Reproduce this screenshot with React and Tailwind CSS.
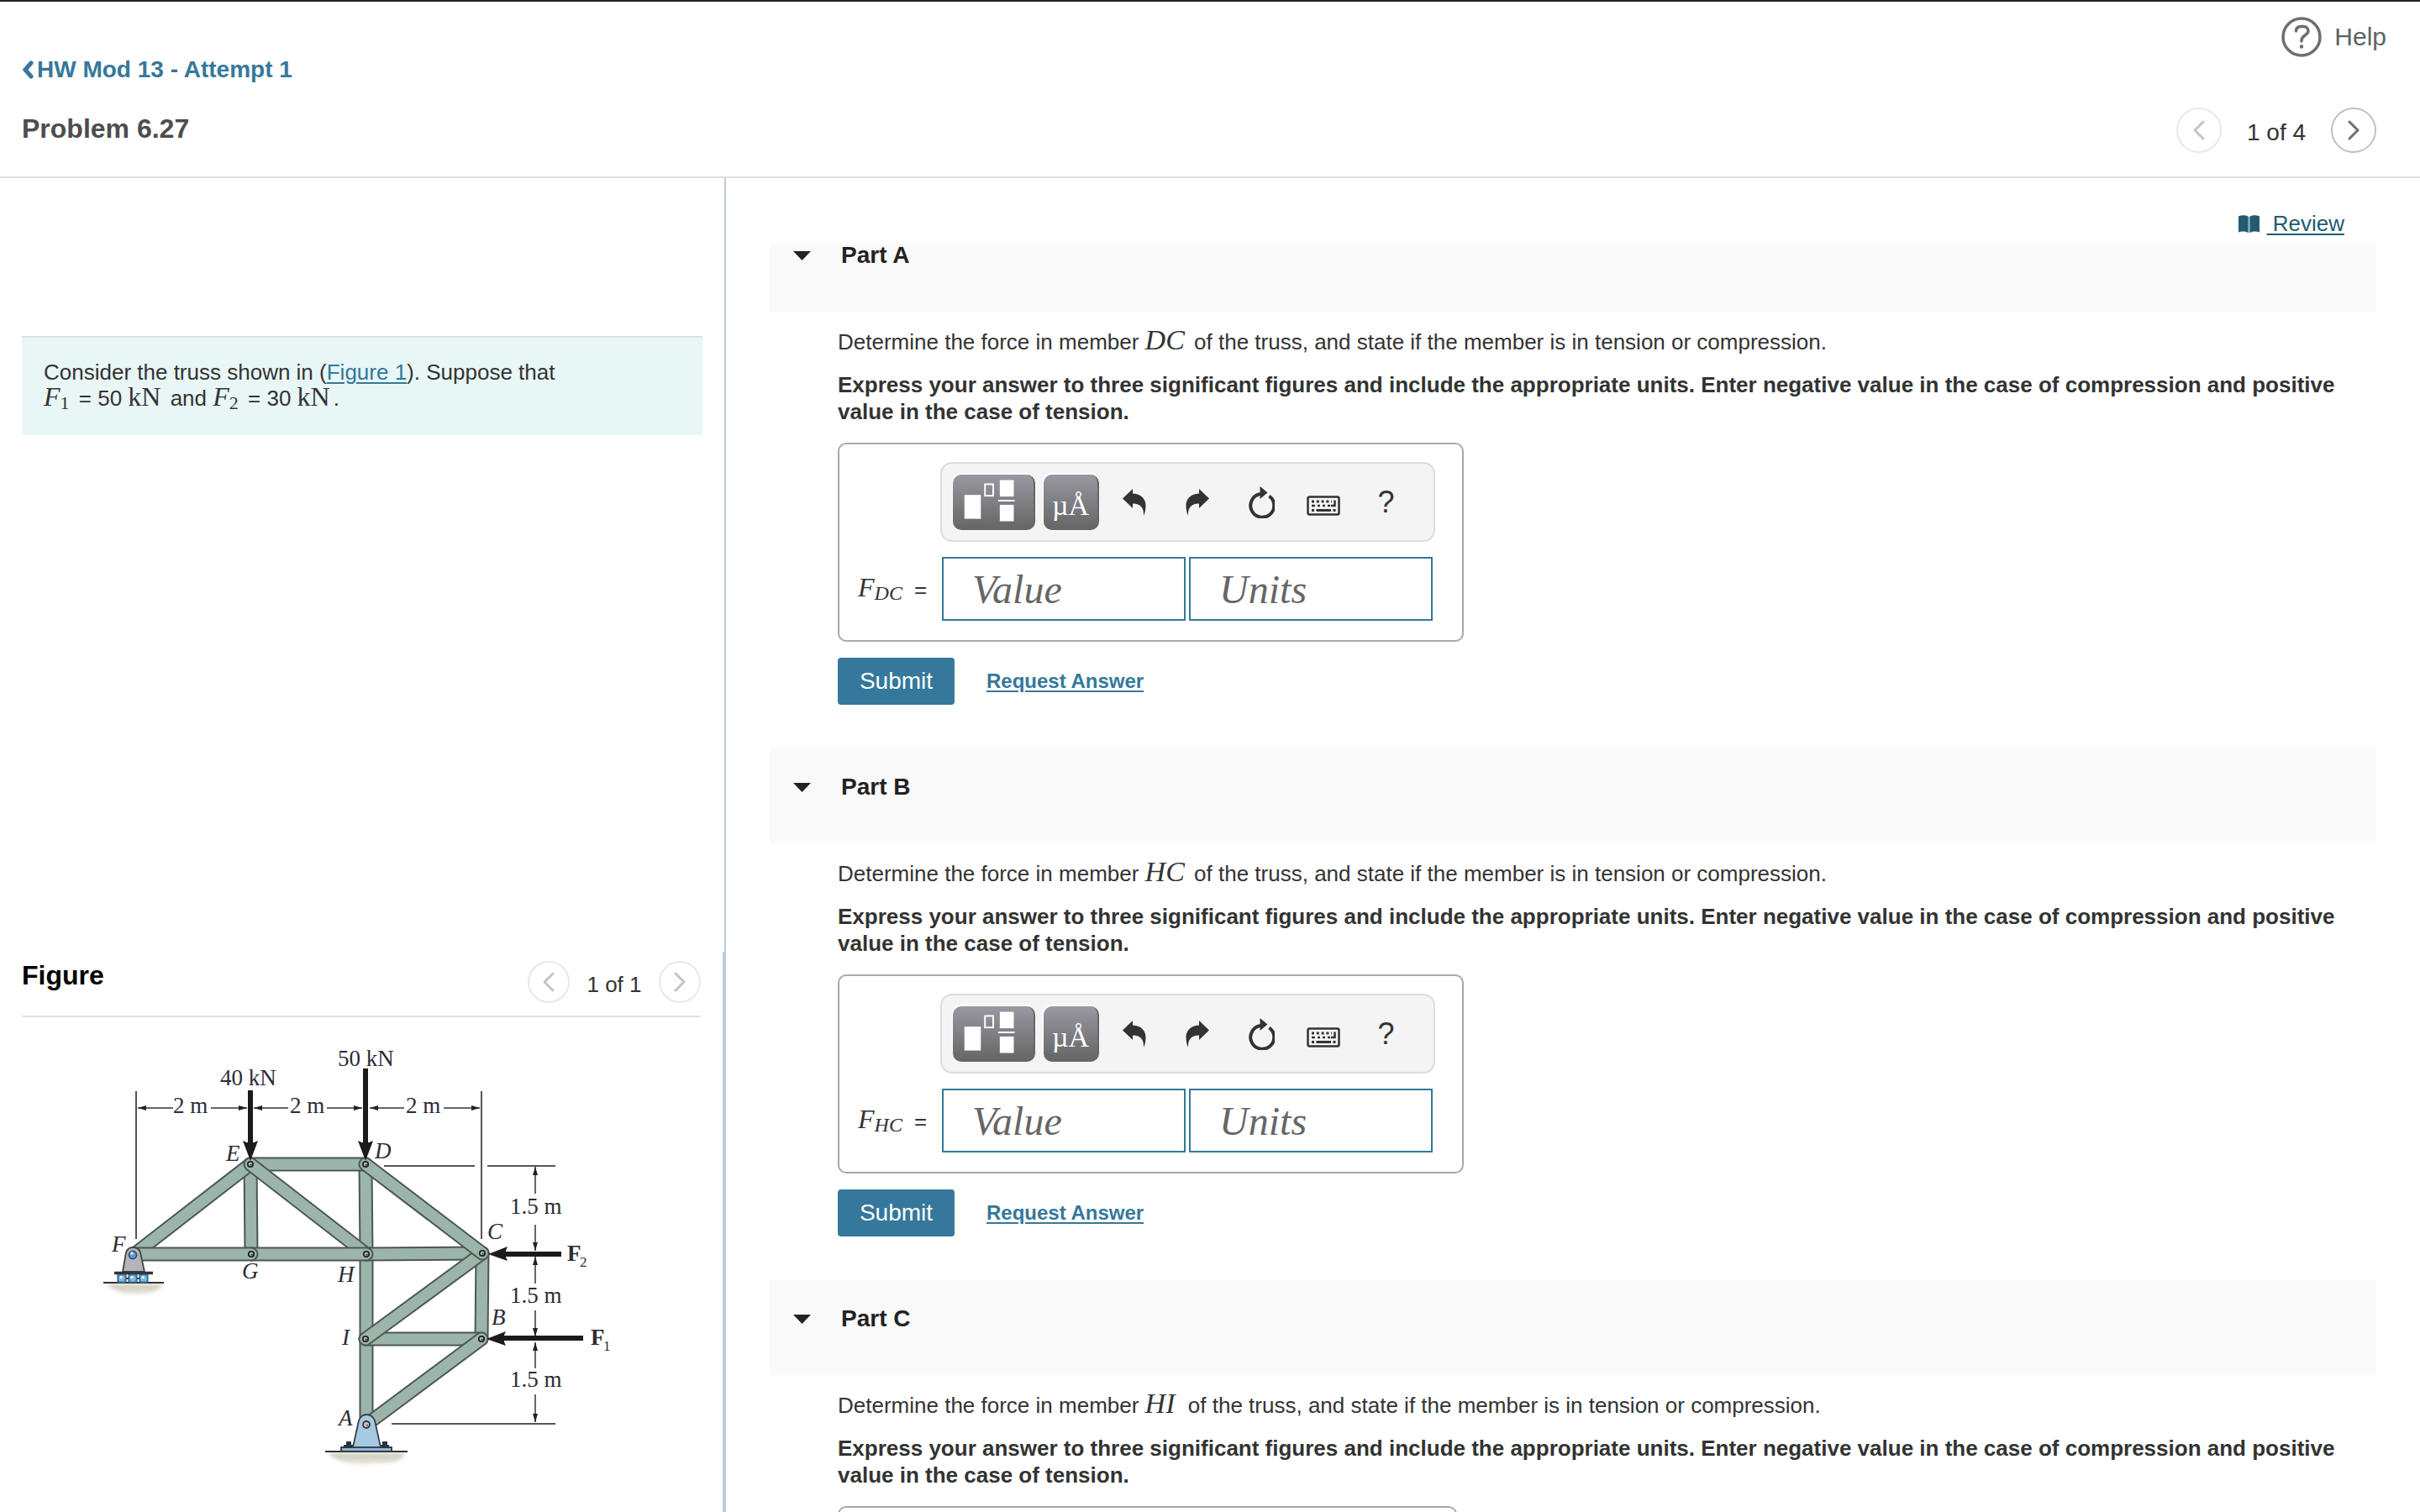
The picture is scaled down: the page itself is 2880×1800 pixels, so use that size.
import React from 'react';

const MEMBER_FILL = '#9bb5aa';
const MEMBER_EDGE = '#4b5753';

const NODES = {
    A: [436, 1696],
    B: [573, 1594],
    C: [574, 1492],
    D: [435, 1386],
    E: [298, 1386],
    F: [160, 1493],
    G: [299, 1493],
    H: [436, 1493],
    I: [435, 1594],
};

// Painted back to front, so the overlaps at each pin come out right
const MEMBERS = ['HA', 'DH', 'EG', 'ED', 'FE', 'EH', 'HC', 'GH', 'FG', 'CB', 'IB', 'AB', 'IC', 'DC'];

const NODE_LABELS = [
    ['E', 269, 1382],
    ['D', 446, 1379],
    ['F', 133, 1490],
    ['G', 288, 1522],
    ['H', 402, 1526],
    ['C', 580, 1475],
    ['B', 585, 1577],
    ['I', 407, 1601],
    ['A', 403, 1697],
];

const TEXT_LABELS = [
    ['40 kN', 262, 1292],
    ['50 kN', 402, 1269],
    ['2 m', 206, 1325],
    ['2 m', 345, 1325],
    ['2 m', 483, 1325],
    ['1.5 m', 607, 1445],
    ['1.5 m', 607, 1551],
    ['1.5 m', 607, 1651],
];

// [x1, y1, x2, y2], the small arrowhead sits on the second point
const DIMENSIONS = [
    [206, 1319, 164, 1319],
    [251, 1319, 294, 1319],
    [343, 1319, 302, 1319],
    [389, 1319, 431, 1319],
    [481, 1319, 440, 1319],
    [528, 1319, 571, 1319],
    [637, 1421, 637, 1389],
    [637, 1458, 637, 1489],
    [637, 1528, 637, 1496],
    [637, 1560, 637, 1591],
    [637, 1629, 637, 1598],
    [637, 1660, 637, 1693],
];

const EXTENSIONS = [
    [162, 1299, 162, 1475],
    [573, 1299, 573, 1475],
    [457, 1388, 565, 1388],
    [580, 1388, 661, 1388],
    [466, 1695, 661, 1695],
];

const PARTS = [
    { id: 'A', member: 'DC' },
    { id: 'B', member: 'HC' },
    { id: 'C', member: 'HI' },
];

const TrussFigure = () => (
    <svg
        viewBox="100 1230 660 540"
        className="w-[660px] h-[540px] shrink-0"
        role="img"
        aria-label="Truss with loads at E, D, C and B"
    >
        <defs>
            <marker id="dim" viewBox="0 0 10 8" refX="10" refY="4" markerWidth="10" markerHeight="8" markerUnits="userSpaceOnUse" orient="auto">
                <path d="M0 1 L10 4 L0 7 Z" fill="#222" />
            </marker>
            <linearGradient id="ground" x1="0" y1="0" x2="0" y2="1">
                <stop offset="0" stopColor="#c9c6b4" />
                <stop offset="1" stopColor="#eceadf" />
            </linearGradient>
            <filter id="soft" x="-10%" y="-20%" width="120%" height="150%">
                <feGaussianBlur stdDeviation="2" />
            </filter>
        </defs>

        {/* Ground */}
        <path d="M126 1529 H194 Q186 1541 168 1540 Q146 1544 126 1529 Z" fill="url(#ground)" filter="url(#soft)" />
        <path d="M390 1730 H483 Q474 1744 450 1742 Q410 1748 390 1730 Z" fill="url(#ground)" filter="url(#soft)" />
        <path d="M123 1527 H195 M387 1728 H485" stroke="#333" strokeWidth="2" />

        {EXTENSIONS.map(([x1, y1, x2, y2]) => (
            <line key={`${x1}-${y1}`} x1={x1} y1={y1} x2={x2} y2={y2} stroke="#555" strokeWidth="2" />
        ))}
        {DIMENSIONS.map(([x1, y1, x2, y2]) => (
            <line key={`${x1}-${y1}`} x1={x1} y1={y1} x2={x2} y2={y2} stroke="#333" strokeWidth="1.5" markerEnd="url(#dim)" />
        ))}

        {MEMBERS.map(name => {
            const [x1, y1] = NODES[name[0]];
            const [x2, y2] = NODES[name[1]];
            return (
                <g key={name} strokeLinecap="round">
                    <line x1={x1} y1={y1} x2={x2} y2={y2} stroke={MEMBER_EDGE} strokeWidth="17" />
                    <line x1={x1} y1={y1} x2={x2} y2={y2} stroke={MEMBER_FILL} strokeWidth="13" />
                </g>
            );
        })}

        {['B', 'C', 'D', 'E', 'G', 'H', 'I'].map(name => (
            <g key={name}>
                <circle cx={NODES[name][0]} cy={NODES[name][1]} r="3.2" fill="#b9c9c2" stroke="#222" strokeWidth="1.8" />
                <circle cx={NODES[name][0] + 0.6} cy={NODES[name][1] + 0.6} r="1.2" fill="#444" />
            </g>
        ))}

        {/* Roller at F */}
        <path d="M146 1514 L150 1491 Q152 1485 158 1485 Q165 1485 167 1491 L172 1514 Z" fill="#b4b5b9" stroke="#444" strokeWidth="1.8" />
        <circle cx="158" cy="1494" r="4.6" fill="#5c9fd0" stroke="#24506e" strokeWidth="1.6" />
        <circle cx="157" cy="1492" r="1.8" fill="#e3f1fa" />
        <path d="M136 1515.500 H182" stroke="#333" strokeWidth="3.500" />
        {[145, 158, 171].map(x => (
            <g key={x}>
                <rect x={x - 5} y="1517" width="10" height="10" fill="#4d8fbd" stroke="#2d4f66" strokeWidth="1" />
                <circle cx={x} cy="1522" r="3.6" fill="#7cbbe2" />
                <circle cx={x - 1} cy="1520.5" r="1.8" fill="#dceefa" />
            </g>
        ))}
        <path d="M150 1522 H153 M163 1522 H166" stroke="#39424a" strokeWidth="2" />

        {/* Pin support at A */}
        <path d="M406 1723 H466 V1728 H406 Z" fill="#8fb6cf" stroke="#2f3c46" strokeWidth="1.800" />
        <path d="M409 1722 h11 M412 1718 h6 M452 1722 h11 M455 1718 h6" stroke="#2b343b" strokeWidth="4" />
        <path d="M420 1723 L427 1691 Q430 1684 436 1684 Q443 1684 446 1691 L453 1723 Z" fill="#a6cae1" stroke="#34424d" strokeWidth="1.800" />
        <circle cx="436" cy="1696" r="4" fill="#c8c8cc" stroke="#333" strokeWidth="1.8" />
        <circle cx="437" cy="1697" r="1.4" fill="#777" />

        {/* Loads */}
        <g stroke="#1d1a1b" strokeWidth="6">
            <path d="M298 1298 V1364 M435 1272 V1364" />
            <path d="M668 1493 H598 M694 1593 H596" />
        </g>
        <g fill="#1d1a1b">
            <path d="M289 1358 Q298 1363 307 1358 L298 1382 Z" />
            <path d="M426 1358 Q435 1363 444 1358 L435 1382 Z" />
            <path d="M604 1484 Q599 1493 604 1501 L581 1493 Z" />
            <path d="M602 1585 Q597 1593 602 1602 L579 1594 Z" />
        </g>

        <g className="font-['Liberation_Serif',serif] text-[27px]" fill="#2b2b35">
            {TEXT_LABELS.map(([text, x, y]) => (
                <text key={`${x}-${y}`} x={x} y={y}>{text}</text>
            ))}
            {NODE_LABELS.map(([text, x, y]) => (
                <text key={text} x={x} y={y} fontStyle="italic">{text}</text>
            ))}
            <text x="675" y="1501" fontWeight="bold">F</text>
            <text x="690" y="1508" fontSize="17">2</text>
            <text x="703" y="1601" fontWeight="bold">F</text>
            <text x="718" y="1608" fontSize="17">1</text>
        </g>
    </svg>
);

const Chevron = ({ flip }) => (
    <svg viewBox="0 0 14 24" className="w-[14px] h-6" fill="none" stroke="currentColor" strokeWidth="3" strokeLinecap="round" strokeLinejoin="round">
        <path d={flip ? 'M2 2 L12 12 L2 22' : 'M12 2 L2 12 L12 22'} />
    </svg>
);

const UndoIcon = ({ flip }) => (
    <svg viewBox="0 0 28 32" className={`w-7 h-8 ${flip ? '-scale-x-100' : ''}`} fill="currentColor">
        <path d="M0 11.500 L12 0 V5.500 C23 6 28 13 27.500 21 C27.300 25 26.500 29 25 32 C25.500 23 22 17.500 12 17.500 V23 Z" />
    </svg>
);

const ResetIcon = () => (
    <svg viewBox="0 0 34 38" className="w-[34px] h-[38px]" fill="none">
        <path d="M27.500 11.500 A14 14 0 1 1 17 9" stroke="currentColor" strokeWidth="4" />
        <path d="M16.500 0 L25.500 7.500 L16.500 15 Z" fill="currentColor" />
    </svg>
);

const KeyboardIcon = () => (
    <svg viewBox="0 0 40 24" className="w-10 h-6 mt-2" fill="none" stroke="currentColor">
        <rect x="1.500" y="1.500" width="37" height="21" rx="2" strokeWidth="2.500" />
        <path d="M6 7 H30" strokeWidth="3" strokeDasharray="3 2.800" />
        <path d="M6 12 H10 M13 12 H16 M19 12 H22 M25 12 H28 M29 12 H34.500 M33.500 5.500 V13" strokeWidth="2.500" />
        <path d="M6 17.500 H9 M11.500 17.500 H29 M31.500 17.500 H34.500" strokeWidth="3" />
    </svg>
);

const TemplateIcon = () => (
    <svg viewBox="0 0 98 66" className="w-full h-full" fill="#fff">
        <rect x="14" y="24" width="20" height="29" />
        <rect x="39" y="11" width="10" height="14" fill="none" stroke="#fff" strokeWidth="2" />
        <rect x="57" y="6" width="17" height="20" />
        <rect x="55" y="30" width="20" height="2" />
        <rect x="57" y="36" width="17" height="20" />
    </svg>
);

const Pager = ({ label, nextDisabled, small }) => {
    const size = small ? 'size-[50px]' : 'size-[54px]';
    return (
        <div className="flex items-center">
            <button type="button" disabled aria-label="Previous" className={`${size} flex items-center justify-center rounded-full border-2 border-[#e8e8e8] text-[#c4c4c4]`}>
                <Chevron />
            </button>
            <span className={`pt-1.5 text-center text-[#333] leading-9 ${small ? 'w-[106px] text-[26px]' : 'w-[130px] text-[28px]'}`}>{label}</span>
            <button
                type="button"
                disabled={nextDisabled}
                aria-label="Next"
                className={`${size} flex items-center justify-center rounded-full border-2 ${nextDisabled ? 'border-[#e8e8e8] text-[#c4c4c4]' : 'border-[#c0c0c0] text-[#6a7070]'}`}
            >
                <Chevron flip />
            </button>
        </div>
    );
};

const Var = ({ name, sub }) => (
    <span className="font-['Liberation_Serif',serif] text-[32px] leading-[0] mr-1">
        <i>{name}</i>
        <span className="text-[22px] align-[-4px]">{sub}</span>
    </span>
);

const Unit = ({ children }) => (
    <span className="font-['Liberation_Serif',serif] text-[32px] leading-[0] mr-1">{children}</span>
);

const darkButton = 'h-[66px] rounded-[10px] bg-linear-to-b from-[#9a98a2] to-[#656565] text-white border-r-2 border-[#666] shadow-[-1px_-2px_0_0_#fff]';
const plainButton = 'w-[75px] h-[66px] flex items-center justify-center text-[#333]';
const answerInput = "w-[290px] h-[76px] border-2 border-[#35789b] bg-white px-[34px] font-['Liberation_Serif',serif] italic text-[48px] text-[#333] placeholder:text-[#666] outline-none";

const AnswerBox = ({ id, member }) => (
    <div className="w-fit flex items-end border-2 border-[#a9a9a9] rounded-[10px] pt-[21px] pb-[23px] pl-[22px] pr-8">
        <label htmlFor={`value-${id}`} className="h-[76px] flex items-center pt-0.5 pr-4 text-[#333] text-[26px] whitespace-nowrap">
            <span className="font-['Liberation_Serif',serif] italic text-[32px]">
                F<span className="text-[24px] align-[-4px]">{member}</span>
            </span>
            <span className="ml-[14px]">=</span>
        </label>
        <div>
            <div className="flex items-center w-[589px] h-[95px] pl-[13px] mb-[18px] border-2 border-[#ddd] rounded-[14px] bg-[#f4f4f4]">
                <button type="button" aria-label="Templates" className={`${darkButton} w-[98px] mr-2.5`}>
                    <TemplateIcon />
                </button>
                <button type="button" aria-label="Symbols" className={`${darkButton} w-[66px] mr-1 pt-2 font-['Liberation_Serif',serif] text-[34px] leading-none`}>
                    µÅ
                </button>
                <button type="button" aria-label="Undo" className={plainButton}><UndoIcon /></button>
                <button type="button" aria-label="Redo" className={plainButton}><UndoIcon flip /></button>
                <button type="button" aria-label="Reset" className={plainButton}><ResetIcon /></button>
                <button type="button" aria-label="Keyboard shortcuts" className={plainButton}><KeyboardIcon /></button>
                <button type="button" aria-label="Help" className={`${plainButton} text-[36px]`}>?</button>
            </div>
            <div className="flex gap-1 pl-0.5">
                <input id={`value-${id}`} type="text" placeholder="Value" className={answerInput} />
                <input id={`units-${id}`} type="text" placeholder="Units" aria-label="Units" className={answerInput} />
            </div>
        </div>
    </div>
);

const Part = ({ id, member, first }) => {
    const [open, setOpen] = React.useState(true);

    return (
        <section>
            <h2 className={`bg-[#f9f9f9] ${first ? 'h-20' : 'h-[113px] pt-[33px]'}`}>
                <button
                    type="button"
                    aria-expanded={open}
                    onClick={() => setOpen(!open)}
                    className="flex items-center gap-9 pl-7 text-[28px] leading-[26px] font-bold text-[#222]"
                >
                    <svg viewBox="0 0 21 11" className={`w-[21px] h-[11px] ${open ? '' : '-rotate-90'}`} fill="currentColor">
                        <path d="M0 0 H21 L10.500 11 Z" />
                    </svg>
                    Part {id}
                </button>
            </h2>
            {open && (
                <div className="pl-[81px] pr-6 pt-5 pb-[52px] text-[26px] leading-8 text-[#333]">
                    <p>
                        Determine the force in member{' '}
                        <i className="inline-block min-w-10 mr-1 font-['Liberation_Serif',serif] text-[34px] leading-[0]">{member}</i>
                        {' '}of the truss, and state if the member is in tension or compression.
                    </p>
                    <p className="mt-[19px] mb-[21px] font-bold">
                        Express your answer to three significant figures and include the appropriate units. Enter negative value in the case of compression and positive value in the case of tension.
                    </p>
                    <AnswerBox id={id} member={member} />
                    <div className="mt-[19px] flex items-center gap-[38px]">
                        <button type="submit" className="w-[139px] h-14 rounded-sm bg-[#35789b] text-white text-[28px]">Submit</button>
                        <a href="#answer" className="font-bold text-2xl leading-7 text-[#35789b] underline decoration-2 underline-offset-3">Request Answer</a>
                    </div>
                </div>
            )}
        </section>
    );
};

const Header = () => (
    <header className="flex justify-between border-t-2 border-t-[#222] border-b-2 border-b-[#e0e0e0] pl-[26px] pt-[18px] pb-7">
        <div className="pt-[47px]">
            <a href="#assignment" className="flex items-center gap-1 text-[28px] leading-8 font-bold text-[#35789b]">
                <svg viewBox="0 0 14 22" className="w-[14px] h-[22px]" fill="none" stroke="currentColor" strokeWidth="5" strokeLinecap="round">
                    <path d="M11 3 L4 11 L11 19" />
                </svg>
                HW Mod 13 - Attempt 1
            </a>
            <h1 className="mt-[34px] text-[32px] leading-10 font-bold text-[#4d4d4d]">Problem 6.27</h1>
        </div>
        <div className="flex flex-col items-end gap-[60px]">
            <a href="#help" className="flex items-center gap-[15px] pr-10 text-[30px] leading-9 text-[#5d6363]">
                <svg viewBox="0 0 48 48" className="size-12" fill="none" stroke="#6a7070" strokeWidth="3.500" strokeLinecap="round">
                    <circle cx="24" cy="24" r="22" />
                    <path d="M17.500 17 C17.500 13 20 11.500 24 11.500 H26 C30 11.500 32 14 32 17 C32 22 24 22 24 28 V29" />
                    <circle cx="24" cy="35.500" r="2.200" fill="#6a7070" stroke="none" />
                </svg>
                Help
            </a>
            <div className="pr-[52px]">
                <Pager label="1 of 4" />
            </div>
        </div>
    </header>
);

const App = () => (
    <div className="h-screen flex flex-col overflow-hidden bg-white font-['Liberation_Sans',Arial,sans-serif]">
        <Header />
        <main className="flex-1 min-h-0 flex">
            <aside className="w-[30%] shrink-0 flex flex-col">
                <div className="h-[58%] shrink-0 border-r-2 border-[#bccbdc] pl-[26px] pr-[26px] pt-[188px]">
                    <div className="border-t-2 border-[#e0e0e0] bg-[#e8f6f6] pt-[26px] pb-7 px-[26px] text-[26px] leading-[31px] text-[#333]">
                        Consider the truss shown in (<a href="#figure" className="text-[#35789b] underline decoration-2 underline-offset-3">Figure 1</a>). Suppose that
                        <br />
                        <Var name="F" sub="1" /> = 50 <Unit>kN</Unit> and <Var name="F" sub="2" /> = 30 <Unit>kN</Unit>.
                    </div>
                </div>
                <div id="figure" className="flex-1 min-h-0 overflow-hidden border-r-4 border-[#bccbdc] px-[26px]">
                    <div className="flex items-start justify-between h-[78px] pt-2 border-b-2 border-[#e0e0e0]">
                        <h2 className="text-[32px] leading-10 font-bold text-black">Figure</h2>
                        <div className="pt-[3px]">
                            <Pager label="1 of 1" nextDisabled small />
                        </div>
                    </div>
                    <div className="pl-[74px] pt-[19px]">
                        <TrussFigure />
                    </div>
                </div>
            </aside>
            <div className="flex-1 min-w-0 px-[52px]">
                <div className="h-[79px] flex justify-end pt-[38px] pr-[38px]">
                    <a href="#review" className="flex items-start gap-[9px] text-[26px] leading-8 text-[#245a70]">
                        <svg viewBox="0 0 25 22" className="w-[25px] h-[22px] mt-1.5" fill="currentColor">
                            <path d="M0 1.500 Q6 -1 11.500 1.500 V21 Q6 18.500 0 20.500 Z" />
                            <path d="M13.500 1.500 Q19 -1 25 1.500 V20.500 Q19 18.500 13.500 21 Z" />
                            <path d="M11.500 2 H13.500 V21 H11.500 Z" opacity="0.5" />
                        </svg>
                        <span className="underline decoration-2 underline-offset-3">&nbsp;Review</span>
                    </a>
                </div>
                {PARTS.map((part, index) => (
                    <Part key={part.id} id={part.id} member={part.member} first={index === 0} />
                ))}
            </div>
        </main>
    </div>
);

export default App;
